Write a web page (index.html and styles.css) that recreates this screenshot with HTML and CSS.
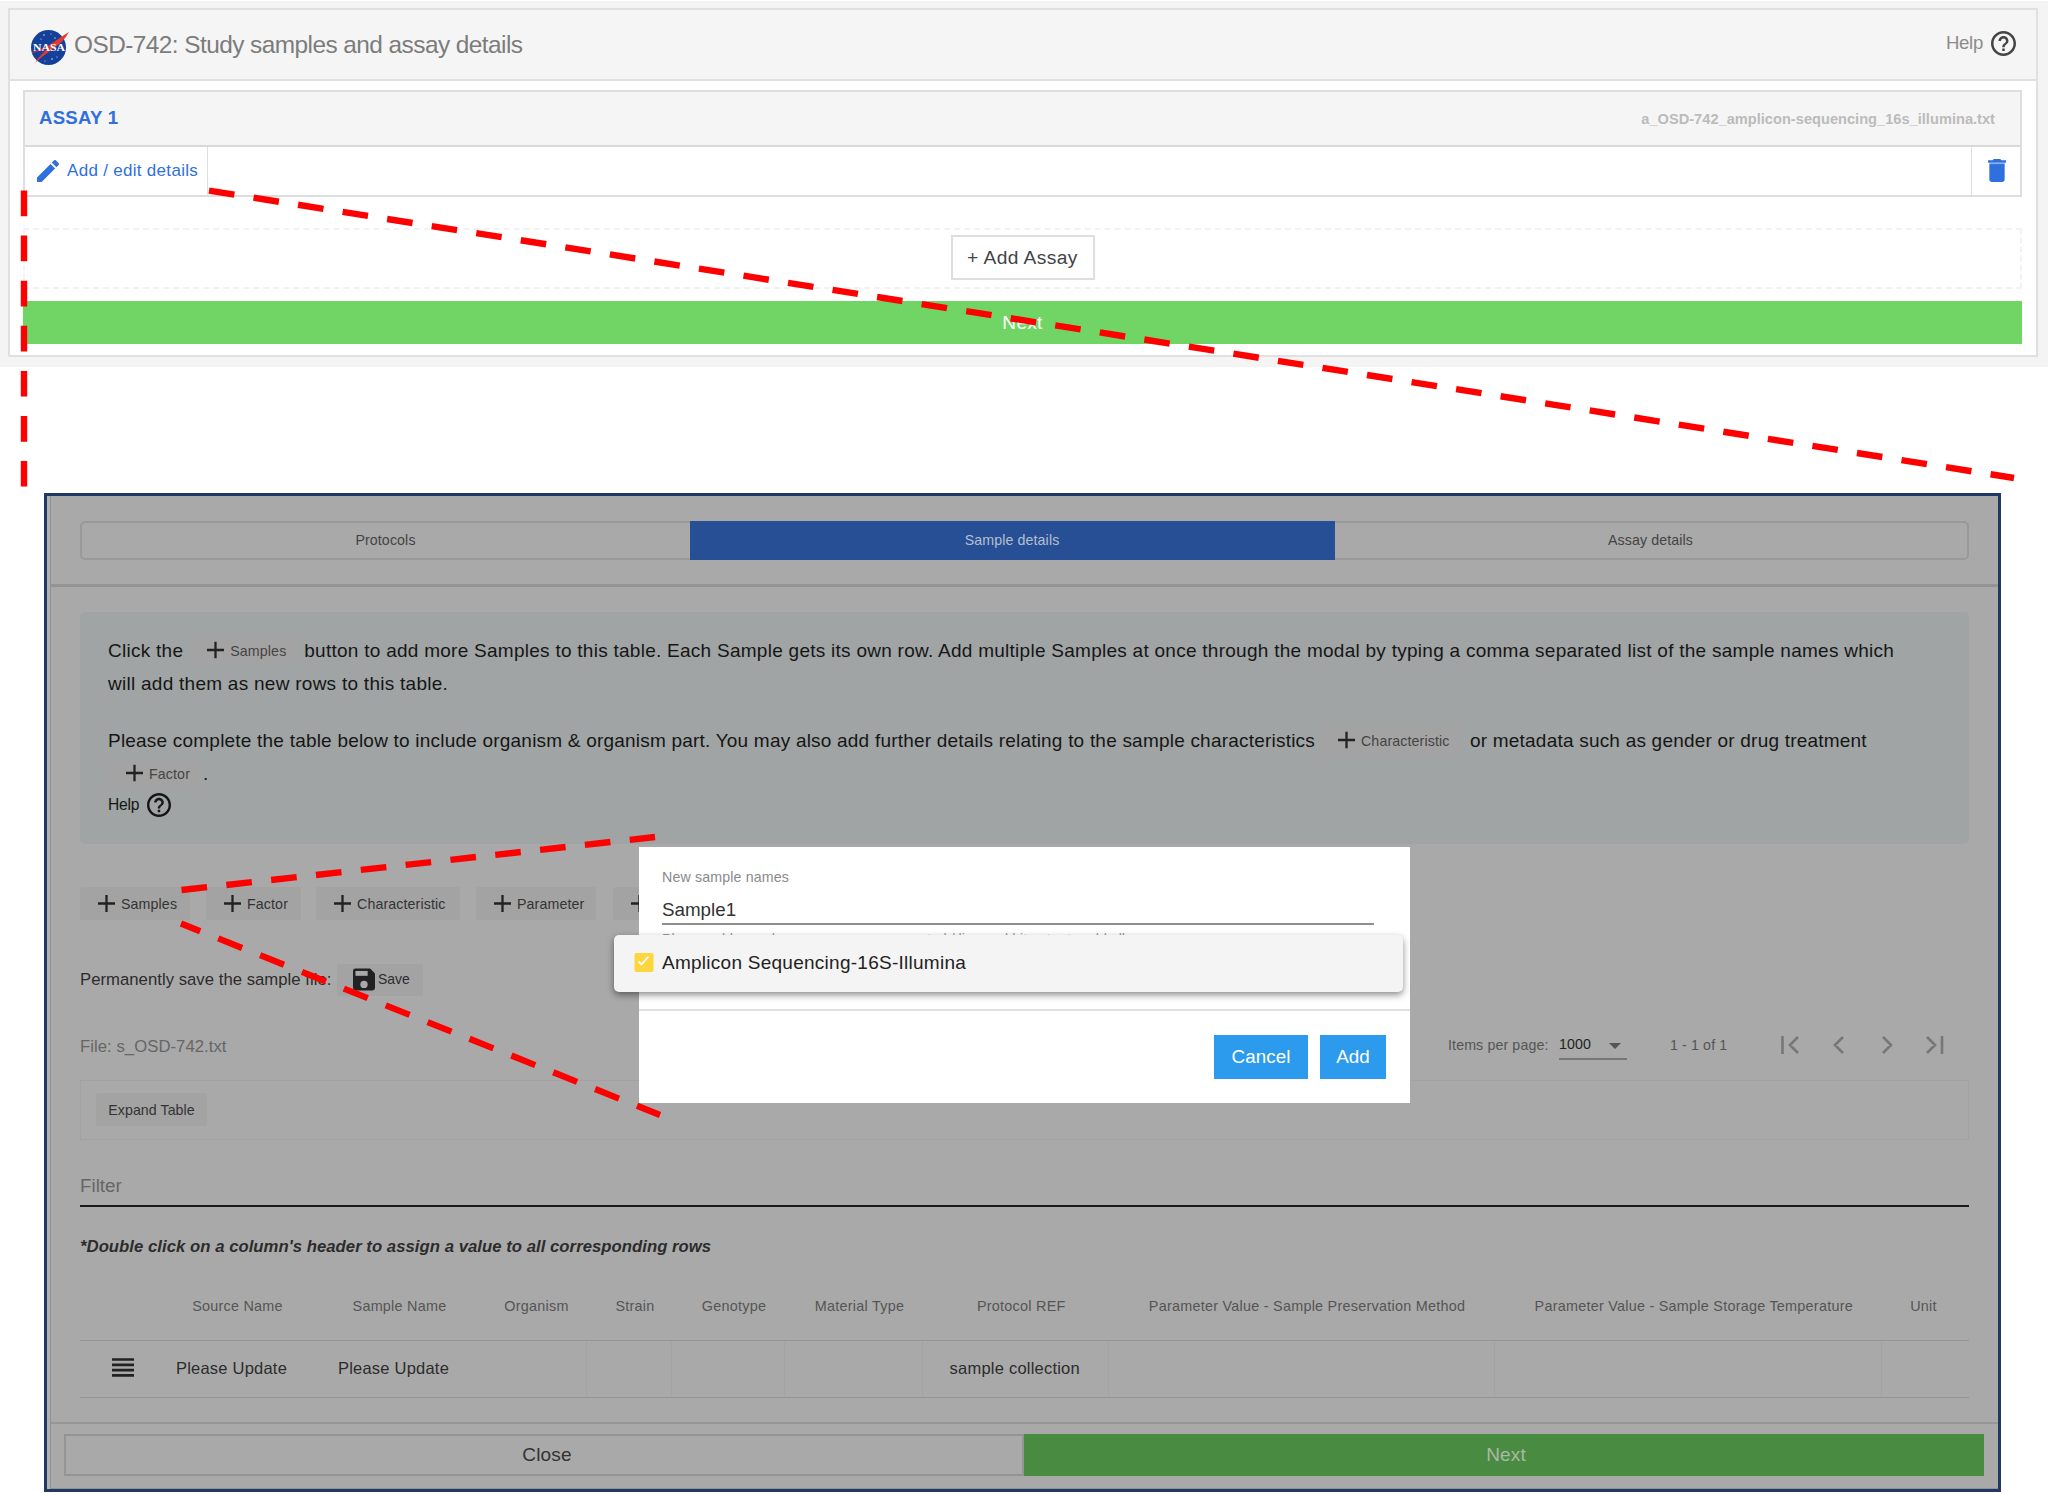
FILE: index.html
```html
<!DOCTYPE html>
<html lang="en">
<head>
<meta charset="utf-8">
<title>OSD-742: Study samples and assay details</title>
<link rel="stylesheet" href="styles.css">
</head>
<body>
<svg class="defs" width="0" height="0" aria-hidden="true">
  <symbol id="plus" viewBox="0 0 17 17"><path d="M8.500 0v17M0 8.500h17" stroke="currentColor" stroke-width="2.300"/></symbol>
  <symbol id="help" viewBox="2 2 20 20"><path fill="currentColor" d="M11 18h2v-2h-2v2zm1-16C6.480 2 2 6.480 2 12s4.480 10 10 10 10-4.480 10-10S17.520 2 12 2zm0 18c-4.410 0-8-3.590-8-8s3.590-8 8-8 8 3.590 8 8-3.590 8-8 8zm0-14c-2.210 0-4 1.790-4 4h2c0-1.100.9-2 2-2s2 .9 2 2c0 2-3 1.750-3 5h2c0-2.250 3-2.500 3-5 0-2.210-1.790-4-4-4z"/></symbol>
</svg>

<section class="page">
  <div class="card">
    <header class="card-head">
      <svg class="logo" viewBox="0 0 40 38"><circle cx="18.500" cy="18.500" r="17.500" fill="#15409a"/><g fill="#fff" opacity=".8"><circle cx="14" cy="6" r=".8"/><circle cx="21" cy="5" r=".6"/><circle cx="25" cy="9" r=".7"/><circle cx="11" cy="10" r=".6"/><circle cx="22" cy="30" r=".8"/><circle cx="15" cy="32" r=".6"/><circle cx="27" cy="28" r=".6"/></g><path d="M0 24C9 21 17 18 24 13 29 9 34 6 39 3 35 10 30 15 24 19 17 24 10 29 5 34 9 27 15 22 21 17 14 21 7 23 0 24Z" fill="#e8392f"/><text x="3" y="22" textLength="32" lengthAdjust="spacingAndGlyphs" class="logo-text">NASA</text></svg>
      <h1 class="title">OSD-742: Study samples and assay details</h1>
      <span class="head-help">Help</span>
      <svg class="head-icon"><use href="#help"/></svg>
    </header>
    <div class="card-body">
      <div class="assay">
        <div class="assay-head"><b class="assay-name">ASSAY 1</b><span class="assay-file">a_OSD-742_amplicon-sequencing_16s_illumina.txt</span></div>
        <div class="assay-row">
          <div class="edit">
            <svg class="pencil" viewBox="3 3 18 18"><path fill="currentColor" d="M3 17.250V21h3.750L17.810 9.940l-3.750-3.750L3 17.250zM20.710 7.040a1 1 0 0 0 0-1.410l-2.340-2.340a1 1 0 0 0-1.410 0l-1.830 1.830 3.750 3.750 1.830-1.830z"/></svg>
            <span>Add / edit details</span>
          </div>
          <div class="trash"><svg viewBox="5 3 14 18"><path fill="currentColor" d="M6 7v12c0 1.100.9 2 2 2h8c1.100 0 2-.9 2-2V7H6zM19 4h-3.500l-1-1h-5l-1 1H5v2h14V4z"/><path fill="#8fb0f0" d="M6 6h12v1H6z"/></svg></div>
        </div>
      </div>
      <div class="dropzone"><button class="add-assay">+ Add Assay</button></div>
      <button class="next">Next</button>
    </div>
  </div>
</section>

<section class="sheet">
  <div class="sheet-in">
    <div class="tabs-wrap">
      <nav class="tabs">
        <div class="tab">Protocols</div>
        <div class="tab active">Sample details</div>
        <div class="tab">Assay details</div>
      </nav>
    </div>
    <div class="content">
      <div class="info">
        <p><span>Click the</span><span class="chip c1"><svg class="plus"><use href="#plus"/></svg>Samples</span><span>button to add more Samples to this table. Each Sample gets its own row. Add multiple Samples at once through the modal by typing a comma separated list of the sample names which</span><br><span>will add them as new rows to this table.</span></p>
        <p class="second"><span>Please complete the table below to include organism &amp; organism part. You may also add further details relating to the sample characteristics</span><span class="chip c2"><svg class="plus"><use href="#plus"/></svg>Characteristic</span><span>or metadata such as gender or drug treatment</span><br><span class="chip c3"><svg class="plus"><use href="#plus"/></svg>Factor</span><span>.</span></p>
        <div class="info-help"><span>Help</span><svg><use href="#help"/></svg></div>
      </div>

      <div class="toolbar">
        <button class="tool t1"><svg class="plus"><use href="#plus"/></svg>Samples</button>
        <button class="tool t2"><svg class="plus"><use href="#plus"/></svg>Factor</button>
        <button class="tool t3"><svg class="plus"><use href="#plus"/></svg>Characteristic</button>
        <button class="tool t4"><svg class="plus"><use href="#plus"/></svg>Parameter</button>
        <button class="tool t5"><svg class="plus"><use href="#plus"/></svg></button>
      </div>

      <div class="save-row">
        <span class="save-label">Permanently save the sample file:</span>
        <button class="save"><svg viewBox="3 3 18 18"><path fill="#222" d="M17 3H5a2 2 0 0 0-2 2v14a2 2 0 0 0 2 2h14a2 2 0 0 0 2-2V7l-4-4z"/><path fill="#a9a9a9" d="M5 5h10v4H5z"/><circle cx="12" cy="16" r="3" fill="#a9a9a9"/></svg>Save</button>
      </div>

      <div class="file-row">
        <span class="file">File: s_OSD-742.txt</span>
        <div class="pager">
          <span class="per">Items per page:</span>
          <div class="select">1000<i class="caret"></i></div>
          <span class="range">1 - 1 of 1</span>
          <svg class="nav" viewBox="0 0 164 20"><g fill="none" stroke="#777" stroke-width="2.600"><path d="M2.500 1v18M18 2l-8 8 8 8M63 2l-8 8 8 8M103 2l8 8-8 8M147 2l8 8-8 8M162 1v18"/></g></svg>
        </div>
      </div>

      <div class="expand"><button class="expand-btn">Expand Table</button></div>
      <div class="filter">Filter</div>
      <p class="hint">*Double click on a column's header to assign a value to all corresponding rows</p>

      <div class="table">
        <div class="tr th">
          <div></div><div>Source Name</div><div>Sample Name</div><div>Organism</div><div>Strain</div><div>Genotype</div><div>Material Type</div><div>Protocol REF</div><div>Parameter Value - Sample Preservation Method</div><div>Parameter Value - Sample Storage Temperature</div><div>Unit</div>
        </div>
        <div class="tr td">
          <div><svg class="grip" viewBox="0 0 22 19"><path d="M0 1.500h22M0 6.800h22M0 12.100h22M0 17.400h22" stroke="#222" stroke-width="2.700"/></svg></div><div>Please Update</div><div>Please Update</div><div></div><div></div><div></div><div></div><div>sample collection</div><div></div><div></div><div></div>
        </div>
      </div>
    </div>
    <footer class="foot">
      <button class="close">Close</button>
      <button class="foot-next">Next</button>
    </footer>
  </div>

  <div class="dialog">
    <div class="field">
      <label>New sample names</label>
      <div class="value">Sample1</div>
      <div class="under">Please add sample names comma separated / line and hit enter to add all</div>
    </div>
    <div class="actions"><button class="blue b1">Cancel</button><button class="blue b2">Add</button></div>
  </div>
  <div class="option">
    <svg class="check" viewBox="0 0 19 19"><rect width="19" height="19" rx="2" fill="#fdd53c"/><path d="M4 8.500l3 3 7-8" fill="none" stroke="#fff" stroke-width="1.800"/></svg>
    <span>Amplicon Sequencing-16S-Illumina</span>
  </div>
</section>

<svg class="callouts" viewBox="0 0 2048 1493" aria-hidden="true">
  <g stroke="#f00" stroke-width="6.400" stroke-dasharray="25.700 19.400">
    <path d="M24 190.500V486.500"/><path d="M209 190.600L2014 478"/><path d="M181.500 890L655 837"/><path d="M181 923.500L660 1115" stroke-dashoffset="5"/>
  </g>
</svg>
</body>
</html>
```
FILE: styles.css
```css
* { box-sizing: border-box; }
body { margin: 0; width: 2048px; height: 1493px; overflow: hidden; position: relative; background: #fff; font-family: "Liberation Sans", Arial, sans-serif; color: #222; }
button { border: 0; padding: 0; margin: 0; font: inherit; letter-spacing: inherit; color: inherit; background: none; display: block; text-align: center; }
svg { display: block; flex: none; }
h1, p { margin: 0; font-weight: normal; }
div, span, label, h1, b { white-space: nowrap; }
.defs, .callouts { position: absolute; left: 0; top: 0; }
.callouts { width: 2048px; height: 1493px; z-index: 5; }

/* Study card */
.page { background: #f4f4f4; height: 366px; margin-top: 1px; padding: 7px 10px 0 8px; }
.card { height: 349px; border: 2px solid #e0e0e0; background: #fff; }
.card-head { height: 71px; background: #f5f5f5; border-bottom: 2px solid #e0e0e0; display: flex; align-items: center; padding: 0 20px 0 20px; }
.logo { width: 40px; height: 38px; margin-top: 7px; }
.logo-text { fill: #fff; font: bold 11px "Liberation Serif", serif; }
.title { font-size: 24.4px; letter-spacing: -.55px; color: #7c7c7c; margin: 0 auto 0 4px; line-height: 69px; }
.head-help { font-size: 18.6px; letter-spacing: -.3px; color: #8c8c8c; line-height: 65px; margin-right: 8px; margin-bottom: 4px; }
.head-icon { width: 25px; height: 25px; color: #444; margin-bottom: 3px; }
.card-body { padding: 9px 14px 0 13px; }
.assay { height: 107px; border: 2px solid #dedede; }
.assay-head { height: 55px; background: #f5f5f5; border-bottom: 2px solid #d9d9d9; display: flex; justify-content: space-between; align-items: center; padding: 0 25px 2px 14px; }
.assay-name { font-size: 18.6px; letter-spacing: .27px; color: #2f6fde; }
.assay-file { font-size: 14.6px; letter-spacing: .02px; font-weight: bold; color: #bbb; padding-top: 3px; }
.assay-row { height: 48px; display: flex; justify-content: space-between; color: #2f6fde; }
.edit { width: 183px; border-right: 1px solid #dedede; display: flex; align-items: center; font-size: 17px; letter-spacing: .3px; padding-left: 12px; gap: 8px; }
.pencil { width: 22px; height: 22px; }
.trash { width: 49px; border-left: 1px solid #dedede; padding: 12px 0 0 16px; }
.trash svg { width: 18px; height: 23px; }
.dropzone { margin-top: 31px; height: 61px; border: 2px dashed #f2f2f2; padding-top: 5px; }
.add-assay { width: 144px; height: 45px; border: 2px solid #dedede; margin: 0 auto; font-size: 19.2px; letter-spacing: .42px; background: #fff; color: #444; }
.next { margin-top: 12px; width: 100%; height: 43px; background: #71d566; color: #fff; font-size: 19px; letter-spacing: .3px; }

/* Dimmed sample sheet */
.sheet { position: absolute; left: 44px; top: 493px; width: 1957px; height: 999px; border: 3px solid #1f3864; background: #b0b0b0; }
.sheet-in { margin-left: 3px; height: 993px; border-left: 1px solid #929292; background: #a9a9a9; display: flex; flex-direction: column; }
.tabs-wrap { height: 91px; padding: 25px 29px 0 29px; border-bottom: 3px solid #949494; }
.tabs { display: flex; height: 39px; border: 2px solid #999; border-radius: 5px; font-size: 14.2px; letter-spacing: .12px; color: #444; }
.tab { width: 608px; text-align: center; line-height: 35px; padding-right: 1px; }
.tab.active { width: 645px; background: #264f95; color: #b5bfd0; margin: -2px 0; line-height: 39px; }
.tab:last-child { flex: 1; }
.content { padding: 25px 29px 0 29px; height: 835px; }
.info { height: 232px; background: #a0a4a4; border-radius: 5px; padding: 22px 28px 0 28px; color: #161616; }
.info p { font-size: 19px; letter-spacing: .265px; line-height: 33px; }
.info .second { margin-top: 24px; letter-spacing: .21px; }
.chip { display: inline-flex; align-items: center; height: 30px; background: #a4a3a3; vertical-align: middle; font-size: 14.2px; letter-spacing: .13px; color: #444; line-height: 30px; border-radius: 4px; transform: translateY(-1.5px); }
.plus { width: 17px; height: 17px; color: #222; }
.chip .plus, .tool .plus { margin-right: 6px; }
.chip.c1 { width: 110px; padding-left: 17px; margin: 0 4px 0 7px; }
.chip.c2 { width: 142px; padding-left: 18px; margin: 0 8px 0 5px; }
.chip.c3 { width: 94px; padding-left: 18px; margin-right: 1px; }
.info-help { display: flex; align-items: center; font-size: 15.6px; letter-spacing: -.2px; height: 29px; gap: 8px; }
.info-help svg { width: 24px; height: 24px; }
.toolbar { display: flex; margin-top: 43px; font-size: 14.2px; letter-spacing: .13px; color: #333; }
.tool { height: 33px; background: #a3a3a3; border-radius: 3px; display: flex; align-items: center; padding-left: 18px; }
.t1 { width: 110px; margin-right: 16px; }
.t2 { width: 95px; margin-right: 15px; }
.t3 { width: 144px; margin-right: 16px; }
.t4 { width: 120px; margin-right: 17px; }
.t5 { width: 110px; }
.save-row { display: flex; align-items: center; margin-top: 44px; height: 32px; color: #2c2c2c; }
.save-label { font-size: 16.7px; letter-spacing: .03px; width: 257px; }
.save { width: 86px; height: 32px; background: #a3a3a3; border-radius: 3px; font-size: 13.9px; display: flex; align-items: center; padding-left: 16px; gap: 3px; padding-bottom: 2px; }
.save svg { width: 22px; height: 23px; }
.file-row { display: flex; justify-content: space-between; height: 84px; color: #666; }
.file { font-size: 16.7px; letter-spacing: .05px; line-height: 101px; }
.pager { display: flex; align-items: center; font-size: 14.2px; letter-spacing: .13px; color: #555; padding-top: 13px; height: 84px; }
.per { width: 111px; }
.select { width: 68px; height: 30px; line-height: 29px; border-bottom: 2px solid #777; color: #222; display: flex; justify-content: space-between; padding-right: 6px; }
.caret { border: 6px solid transparent; border-top-color: #555; margin-top: 13px; height: 0; }
.range { margin: 0 53px 0 43px; width: 57px; }
.nav { width: 164px; height: 20px; margin: 1px 25px 0 0; }
.expand { height: 60px; border: 1px solid #a2a2a2; padding: 12px 15px; }
.expand-btn { width: 111px; height: 33px; background: #a3a3a3; border-radius: 3px; font-size: 14.2px; letter-spacing: .06px; color: #333; }
.filter { height: 67px; border-bottom: 2px solid #1a1a1a; font-size: 18.8px; line-height: 91px; color: #666; }
.hint { font-size: 16.7px; letter-spacing: .04px; font-weight: bold; font-style: italic; line-height: 80px; height: 65px; color: #2c2c2c; }
.tr { display: grid; grid-template-columns: 71px 162px 162px 112px 85px 113px 138px 185.5px 386px 387.5px 1fr; text-align: center; }
.th { height: 69px; border-bottom: 1px solid #949494; font-size: 14.4px; letter-spacing: .25px; line-height: 68px; color: #555; }
.th > div { padding-left: 11px; }
.th > div:last-child { padding: 0 4px 0 0; }
.td { height: 57px; border-bottom: 1px solid #949494; font-size: 16.5px; letter-spacing: .22px; line-height: 55px; color: #2c2c2c; }
.td > div { padding-right: 1px; }
.td > div:nth-child(n+4) { height: 56px; border-right: 1px solid #a3a3a3; }
.td > div:last-child { border-right: 0; }
.grip { width: 22px; height: 19px; margin: 17px 0 0 32px; }
.foot { border-top: 2px solid #969696; height: 67px; padding: 10px 14px 0 13px; display: flex; font-size: 19px; letter-spacing: .15px; border-bottom: 1px solid #929292; }
.close { width: 960px; height: 42px; border: 2px solid #949494; color: #333; padding-left: 6px; }
.foot-next { flex: 1; height: 42px; background: #4a8b42; color: #a9b8a7; padding-left: 4px; }

/* Add-samples dialog */
.dialog { position: absolute; left: 592px; top: 351px; width: 771px; height: 256px; background: #fff; }
.field { height: 164px; border-bottom: 2px solid #e0e0e0; padding: 21px 36px 0 23px; }
.field label { display: block; font-size: 14.2px; letter-spacing: .15px; line-height: 18px; color: #8a8a8a; }
.value { height: 39px; border-bottom: 2px solid #8f8f8f; font-size: 18.8px; line-height: 47px; color: #333; }
.under { font-size: 14.2px; color: #999; line-height: 14px; margin-top: 7px; }
.actions { display: flex; justify-content: flex-end; padding: 24px 24px 0 0; gap: 12px; }
.blue { height: 44px; background: #2c9bee; color: #fff; font-size: 18.8px; letter-spacing: .1px; }
.b1 { width: 94px; }
.b2 { width: 66px; }
.option { position: absolute; left: 567px; top: 439px; width: 789px; height: 57px; background: #f4f4f4; border-radius: 5px; box-shadow: 0 3px 7px rgba(0,0,0,.45); display: flex; align-items: center; padding: 0 0 2px 20px; gap: 8px; font-size: 19px; letter-spacing: .26px; color: #222; }
.check { width: 20px; height: 19px; }
```
